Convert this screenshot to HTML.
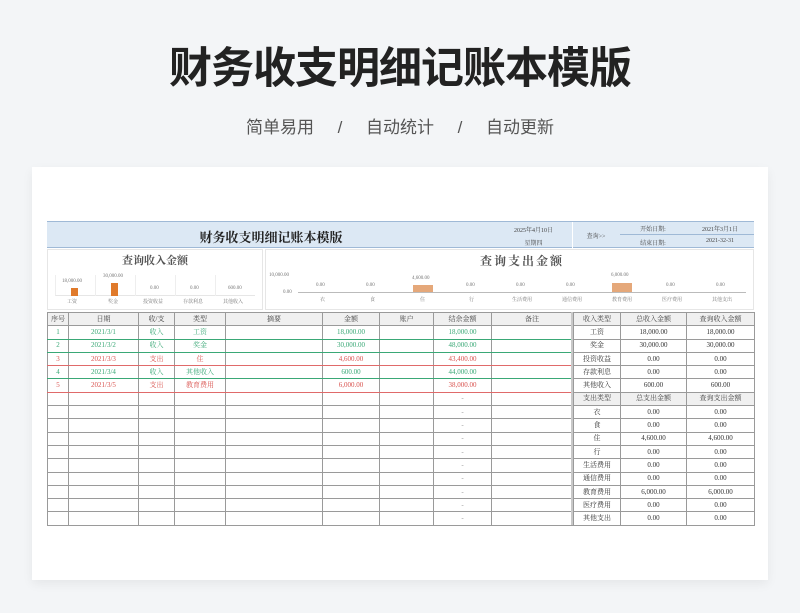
<!DOCTYPE html>
<html><head><meta charset="utf-8"><style>
*{margin:0;padding:0;box-sizing:border-box}
body{width:800px;height:613px;background:#f3f5f7;font-family:"Liberation Serif","Noto Serif CJK SC",serif;position:relative;overflow:hidden;color:#333}
.a{position:absolute}
h1{position:absolute;left:0;width:800px;top:34px;text-align:center;font:bold 43px "Liberation Sans","Noto Sans CJK SC",sans-serif;color:#222;letter-spacing:-1px}
.sub{position:absolute;left:0;width:800px;top:113px;text-align:center;font:17px "Liberation Sans","Noto Sans CJK SC",sans-serif;color:#555;word-spacing:0}
.card{position:absolute;left:32px;top:167px;width:736px;height:413px;background:#fff;box-shadow:0 4px 10px rgba(0,0,0,.06)}
table{border-collapse:collapse;table-layout:fixed;position:absolute}
td{border:1px solid #9a9a9a;height:13.3px;font-size:7px;text-align:center;padding:0;line-height:11px;white-space:nowrap;overflow:hidden}
tr.h td{background:#f0f0f0;color:#444}
.g td{color:#3aa876}.r td{color:#d9534f}
.g td,.gb td{border-bottom:1.5px solid #3aa876}
.r td{border-bottom:1.5px solid #e06a6a}
.t{font-size:6px;color:#666;position:absolute;white-space:nowrap;text-align:center}
.sm{font-size:5px;color:#777;position:absolute;white-space:nowrap}
</style></head><body>
<h1>财务收支明细记账本模版</h1>
<div class="sub">简单易用&nbsp;&nbsp;&nbsp;&nbsp;&nbsp;/&nbsp;&nbsp;&nbsp;&nbsp;&nbsp;自动统计&nbsp;&nbsp;&nbsp;&nbsp;&nbsp;/&nbsp;&nbsp;&nbsp;&nbsp;&nbsp;自动更新</div>
<div class="card"></div>

<!-- header band -->
<div class="a" style="left:47px;top:221px;width:707px;height:27px;background:#dce8f4;border-top:1px solid #9fb9d6;border-bottom:1px solid #9fb9d6"></div>
<div class="a" style="left:47px;top:227px;width:448px;text-align:center;font-size:13px;font-weight:bold;color:#222">财务收支明细记账本模版</div>
<div class="a" style="left:572px;top:222px;width:1px;height:26px;background:#fff"></div>
<div class="t" style="left:495px;top:225px;width:77px;color:#444">2025年4月10日</div>
<div class="t" style="left:495px;top:238px;width:77px;color:#444">星期四</div>
<div class="t" style="left:572px;top:231px;width:48px;color:#444">查询&gt;&gt;</div>
<div class="a" style="left:620px;top:234px;width:134px;height:1px;background:#9fb9d6"></div>
<div class="t" style="left:620px;top:224px;width:66px;color:#444">开始日期:</div>
<div class="t" style="left:686px;top:224px;width:68px;color:#444">2021年3月1日</div>
<div class="t" style="left:620px;top:238px;width:66px;color:#444">结束日期:</div>
<div class="t" style="left:686px;top:238px;width:68px;color:#444">2021-32-31</div>

<!-- income chart -->
<div class="a" style="left:47px;top:249px;width:216px;height:61px;border:1px solid #e6e6e6"></div>
<div class="a" style="left:47px;top:252px;width:216px;text-align:center;font-size:11px;font-weight:bold;color:#555">查询收入金额</div>
<div class="a" style="left:55px;top:275px;width:200px;height:21px;border-left:1px solid #eee;border-bottom:1px solid #e6e6e6"></div>
<div class="a" style="left:95px;top:275px;width:1px;height:21px;background:#eee"></div>
<div class="a" style="left:135px;top:275px;width:1px;height:21px;background:#eee"></div>
<div class="a" style="left:175px;top:275px;width:1px;height:21px;background:#eee"></div>
<div class="a" style="left:215px;top:275px;width:1px;height:21px;background:#eee"></div>
<div class="a" style="left:71px;top:288px;width:7px;height:8px;background:#e07a2b"></div>
<div class="a" style="left:111px;top:283px;width:7px;height:13px;background:#e07a2b"></div>
<div class="sm" style="left:62px;top:279px">18,000.00</div>
<div class="sm" style="left:103px;top:274px">30,000.00</div>
<div class="sm" style="left:150px;top:286px">0.00</div>
<div class="sm" style="left:190px;top:286px">0.00</div>
<div class="sm" style="left:228px;top:286px">600.00</div>
<div class="sm" style="left:67px;top:298px">工资</div>
<div class="sm" style="left:108px;top:298px">奖金</div>
<div class="sm" style="left:143px;top:298px">投资收益</div>
<div class="sm" style="left:183px;top:298px">存款利息</div>
<div class="sm" style="left:223px;top:298px">其他收入</div>

<!-- expense chart -->
<div class="a" style="left:265px;top:249px;width:489px;height:61px;border:1px solid #e6e6e6"></div>
<div class="a" style="left:265px;top:252px;width:489px;text-align:center;font-size:12px;font-weight:bold;color:#555;letter-spacing:2px;padding-left:25px">查询支出金额</div>
<div class="sm" style="left:269px;top:273px">10,000.00</div>
<div class="sm" style="left:283px;top:290px">0.00</div>
<div class="a" style="left:298px;top:292px;width:448px;height:1px;background:#bbb"></div>
<div class="a" style="left:413px;top:285px;width:20px;height:7px;background:#e5a87a"></div>
<div class="a" style="left:612px;top:283px;width:20px;height:9px;background:#e5a87a"></div>
<div class="sm" style="left:316px;top:283px">0.00</div>
<div class="sm" style="left:366px;top:283px">0.00</div>
<div class="sm" style="left:412px;top:276px">4,600.00</div>
<div class="sm" style="left:466px;top:283px">0.00</div>
<div class="sm" style="left:516px;top:283px">0.00</div>
<div class="sm" style="left:566px;top:283px">0.00</div>
<div class="sm" style="left:611px;top:273px">6,000.00</div>
<div class="sm" style="left:666px;top:283px">0.00</div>
<div class="sm" style="left:716px;top:283px">0.00</div>
<div class="sm" style="left:320px;top:296px">衣</div>
<div class="sm" style="left:370px;top:296px">食</div>
<div class="sm" style="left:420px;top:296px">住</div>
<div class="sm" style="left:469px;top:296px">行</div>
<div class="sm" style="left:512px;top:296px">生活费用</div>
<div class="sm" style="left:562px;top:296px">通信费用</div>
<div class="sm" style="left:612px;top:296px">教育费用</div>
<div class="sm" style="left:662px;top:296px">医疗费用</div>
<div class="sm" style="left:712px;top:296px">其他支出</div>

<!-- left table -->
<table style="left:47px;top:312px;width:525px">
<colgroup><col style="width:21px"><col style="width:70px"><col style="width:36px"><col style="width:51px"><col style="width:97px"><col style="width:57px"><col style="width:54px"><col style="width:58px"><col style="width:81px"></colgroup>
<tr class="h"><td>序号</td><td>日期</td><td>收/支</td><td>类型</td><td>摘要</td><td>金额</td><td>账户</td><td>结余金额</td><td>备注</td></tr>
<tr class="g"><td>1</td><td>2021/3/1</td><td>收入</td><td>工资</td><td></td><td>18,000.00</td><td></td><td>18,000.00</td><td></td></tr>
<tr class="g"><td>2</td><td>2021/3/2</td><td>收入</td><td>奖金</td><td></td><td>30,000.00</td><td></td><td>48,000.00</td><td></td></tr>
<tr class="r"><td>3</td><td>2021/3/3</td><td>支出</td><td>住</td><td></td><td>4,600.00</td><td></td><td>43,400.00</td><td></td></tr>
<tr class="g"><td>4</td><td>2021/3/4</td><td>收入</td><td>其他收入</td><td></td><td>600.00</td><td></td><td>44,000.00</td><td></td></tr>
<tr class="r"><td>5</td><td>2021/3/5</td><td>支出</td><td>教育费用</td><td></td><td>6,000.00</td><td></td><td>38,000.00</td><td></td></tr>
<tr><td></td><td></td><td></td><td></td><td></td><td></td><td></td><td style="color:#999">-</td><td></td></tr>
<tr><td></td><td></td><td></td><td></td><td></td><td></td><td></td><td style="color:#999">-</td><td></td></tr>
<tr><td></td><td></td><td></td><td></td><td></td><td></td><td></td><td style="color:#999">-</td><td></td></tr>
<tr><td></td><td></td><td></td><td></td><td></td><td></td><td></td><td style="color:#999">-</td><td></td></tr>
<tr><td></td><td></td><td></td><td></td><td></td><td></td><td></td><td style="color:#999">-</td><td></td></tr>
<tr><td></td><td></td><td></td><td></td><td></td><td></td><td></td><td style="color:#999">-</td><td></td></tr>
<tr><td></td><td></td><td></td><td></td><td></td><td></td><td></td><td style="color:#999">-</td><td></td></tr>
<tr><td></td><td></td><td></td><td></td><td></td><td></td><td></td><td style="color:#999">-</td><td></td></tr>
<tr><td></td><td></td><td></td><td></td><td></td><td></td><td></td><td style="color:#999">-</td><td></td></tr>
<tr><td></td><td></td><td></td><td></td><td></td><td></td><td></td><td style="color:#999">-</td><td></td></tr>
</table>
<div class="a" style="left:571px;top:312px;width:3px;height:213px;background:#c8c8c8"></div>
<!-- right table -->
<table style="left:573px;top:312px;width:181px">
<colgroup><col style="width:47px"><col style="width:66px"><col style="width:68px"></colgroup>
<tr class="h"><td>收入类型</td><td>总收入金额</td><td>查询收入金额</td></tr>
<tr><td>工资</td><td>18,000.00</td><td>18,000.00</td></tr>
<tr><td>奖金</td><td>30,000.00</td><td>30,000.00</td></tr>
<tr><td>投资收益</td><td>0.00</td><td>0.00</td></tr>
<tr><td>存款利息</td><td>0.00</td><td>0.00</td></tr>
<tr><td>其他收入</td><td>600.00</td><td>600.00</td></tr>
<tr class="h"><td>支出类型</td><td>总支出金额</td><td>查询支出金额</td></tr>
<tr><td>衣</td><td>0.00</td><td>0.00</td></tr>
<tr><td>食</td><td>0.00</td><td>0.00</td></tr>
<tr><td>住</td><td>4,600.00</td><td>4,600.00</td></tr>
<tr><td>行</td><td>0.00</td><td>0.00</td></tr>
<tr><td>生活费用</td><td>0.00</td><td>0.00</td></tr>
<tr><td>通信费用</td><td>0.00</td><td>0.00</td></tr>
<tr><td>教育费用</td><td>6,000.00</td><td>6,000.00</td></tr>
<tr><td>医疗费用</td><td>0.00</td><td>0.00</td></tr>
<tr><td>其他支出</td><td>0.00</td><td>0.00</td></tr>
</table>
</body></html>
